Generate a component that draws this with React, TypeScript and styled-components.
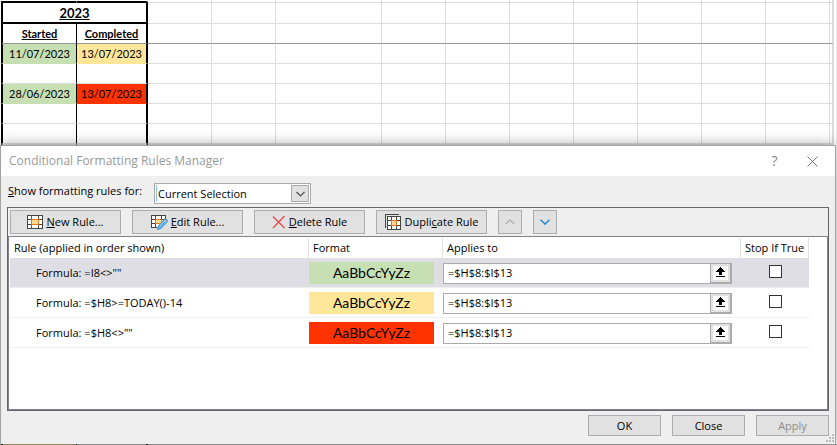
import React from "react";
import styled, { createGlobalStyle, css } from "styled-components";

const GlobalStyle = createGlobalStyle`
  *, *::before, *::after { box-sizing: border-box; }
  body { margin: 0; background: #fff; overflow: hidden; }
  button, input, select { font: inherit; color: inherit; margin: 0; }
`;

const ui = `"Open Sans", "Noto Sans", sans-serif`;
const sheetFont = `Lato, "Open Sans", sans-serif`;

const Page = styled.main`
  font: 11px/16px ${ui};
  color: #000;
`;

/* ---------- worksheet ---------- */

const Sheet = styled.div`
  padding: 0 2px 0 1px;
  background: #fff;
  border-right: 1px solid #ececec;
`;

const Grid = styled.table`
  width: 100%;
  table-layout: fixed;
  border-collapse: separate;
  border-spacing: 0;
  border-right: 1px solid #dcdcdc;
  font: 11px/14px ${sheetFont};
`;

const GridRow = styled.tr<{ $height: number; $frozen?: boolean }>`
  height: ${(p) => p.$height}px;
  & > * { border-bottom: 1px solid ${(p) => (p.$frozen ? "#979797" : "#dcdcdc")}; }
`;

const Cell = styled.td<{ $fill?: string }>`
  padding: 0;
  text-align: center;
  border-right: 1px solid #dcdcdc;
  ${(p) => p.$fill && css`
    background: ${p.$fill};
    &&& { border-bottom-color: ${p.$fill}; }
  `}
`;

const StartCell = styled(Cell)`
  border-left: 2px solid #000;
  border-right-color: #000;
`;

const EndCell = styled(Cell)`
  border-right: 2px solid #000;
`;

const YearHead = styled.th`
  padding: 0;
  border-left: 2px solid #000;
  border-right: 2px solid #000;
  font-size: 13px;
  text-decoration: underline;
  &&& { border-bottom: 2px solid #000; }
`;

const TopCell = styled(Cell)`
  &&& { border-bottom: 2px solid #000; }
`;

const Heading = styled.span`
  font-weight: 700;
  text-decoration: underline;
`;

const PeekRow = styled.div`
  display: grid;
  grid-template-columns: 1px 2px 73px 1px 69px 2px 1fr;
  height: 1px;
  background: #a6a6a6;
`;

const Peek = styled.span<{ $color: string }>`
  background: ${(p) => p.$color};
`;

/* ---------- dialog ---------- */

const Dialog = styled.section`
  position: relative;
  margin: 0 1px 0 0;
  border: solid #a3a3a3;
  border-width: 1px 1px 0;
  background: #efefef;
  box-shadow: 0 0 14px rgba(0, 0, 0, 0.35);
`;

const TitleBar = styled.header`
  display: flex;
  align-items: center;
  height: 30px;
  padding: 0 8px;
  background: #fff;
  color: #999;
`;

const Title = styled.h1`
  flex: 1;
  margin: 0;
  font-size: 12px;
  font-weight: 400;
`;

const CaptionButton = styled.button`
  display: grid;
  place-items: center;
  width: 45px;
  height: 28px;
  padding: 0;
  border: 0;
  background: none;
  font-size: 14px;
  color: #808080;
  &:last-child { width: 30px; }
`;

const Content = styled.div`
  padding: 7px 6px 8px;
`;

const ScopeRow = styled.div`
  display: flex;
  align-items: flex-start;
  gap: 10px;
  height: 24px;
`;

const ScopeLabel = styled.label`
  width: 137px;
  padding-left: 1px;
  white-space: nowrap;
`;

const SelectBox = styled.span`
  display: grid;
  grid-template-columns: 1fr 18px;
  align-items: center;
  width: 157px;
  height: 21px;
  padding: 1px;
  border: 1px solid #ababab;
  background: #fff;
`;

const Select = styled.select`
  grid-area: 1 / 1 / 2 / 3;
  width: 100%;
  height: 17px;
  padding: 0 18px 0 1px;
  border: 0;
  border-left: 1px solid #91c4ea;
  outline: 0;
  border-radius: 0;
  background: none;
  appearance: none;
`;

const SelectArrow = styled.span`
  grid-area: 1 / 2;
  display: grid;
  place-items: center;
  height: 17px;
  border: 1px solid #ababab;
  background: #e1e1e1;
  pointer-events: none;
`;

const Frame = styled.div`
  border: 1px solid #65656a;
`;

const Toolbar = styled.div`
  display: flex;
  gap: 11px;
  padding: 2px 2px;
`;

const Button = styled.button<{ $width: number }>`
  display: flex;
  align-items: center;
  justify-content: center;
  gap: 3px;
  width: ${(p) => p.$width}px;
  height: 24px;
  padding: 0;
  border: 1px solid #adadad;
  background: #e1e1e1;
  white-space: nowrap;
  &:disabled { color: #8c8c8c; }
`;

const ListBox = styled.div`
  height: 174px;
  padding: 1px 18px 0 1px;
  border: 1px solid #828290;
  background: #fff;
`;

const Rules = styled.table`
  width: 100%;
  table-layout: fixed;
  border-collapse: separate;
  border-spacing: 0;
`;

const ColumnHead = styled.th`
  height: 20px;
  padding: 0 0 0 4px;
  border-right: 1px solid #e2e2e2;
  font-weight: 400;
  text-align: left;
  white-space: nowrap;
`;

const RuleRow = styled.tr<{ $selected?: boolean }>`
  height: 30px;
  background: ${(p) => (p.$selected ? "#dfdee4" : "#fff")};
`;

const RuleCell = styled.td`
  padding: 0;
  border-bottom: 1px solid #eee;
`;

const Formula = styled(RuleCell)`
  padding-left: 26px;
`;

const TickCell = styled(RuleCell)`
  text-align: center;
`;

const Swatch = styled.div<{ $fill: string }>`
  width: 125px;
  height: 22px;
  background: ${(p) => p.$fill};
  font: 14px/22px ${sheetFont};
  text-align: center;
`;

const RangeField = styled.div`
  display: flex;
  height: 21px;
  margin: 1px 9px 0 0;
  border: 1px solid #ababab;
  background: #fff;
`;

const RangeInput = styled.input`
  flex: 1;
  min-width: 0;
  padding: 0 4px;
  border: 0;
  outline: 0;
  background: none;
`;

const PickButton = styled.button`
  display: grid;
  place-items: center;
  width: 21px;
  height: 19px;
  padding: 0;
  border: 1px solid #ababab;
  border-width: 0 1px 1px;
  background: #fff;
  box-shadow: inset 0 0 0 2px #e1e1e1;
`;

const Tick = styled.input`
  display: block;
  width: 13px;
  height: 13px;
  margin: 0 auto 2px;
  border: 1px solid #333;
  background: #fff;
  appearance: none;
  &:checked { background: #333; }
`;

const Footer = styled.footer`
  display: flex;
  justify-content: flex-end;
  gap: 11px;
  padding-top: 4px;
`;

const FooterButton = styled(Button)`
  height: 21px;
`;

const Grip = styled.svg`
  position: absolute;
  right: 1px;
  bottom: 2px;
`;

/* ---------- icons ---------- */

const TableIcon = () => (
  <svg width="16" height="14" viewBox="0 0 16 14" shapeRendering="crispEdges" aria-hidden="true">
    <path d="M0 0H16V14H0Z" fill="#444" />
    <path d="M1 1H4V4H1ZM5 1H11V4H5ZM12 1H15V4H12ZM1 5H4V9H1ZM12 5H15V9H12ZM1 10H4V13H1ZM5 10H11V13H5ZM12 10H15V13H12Z" fill="#fff" />
    <path d="M4 4H12V10H4Z" fill="#e0771c" />
    <path d="M5 5H11V9H5Z" fill="#fbd98f" />
    <path d="M4 1V4M11 1V4M4 10V13M11 10V13" stroke="#e0771c" fill="none" opacity=".3" />
  </svg>
);

const EditIcon = () => (
  <svg width="17" height="15" viewBox="0 0 17 15" aria-hidden="true">
    <g shapeRendering="crispEdges">
      <path d="M0 0H15V13H0Z" fill="#444" />
      <path d="M1 1H4V4H1ZM5 1H10V4H5ZM11 1H14V4H11ZM1 5H4V8H1ZM11 5H14V8H11ZM1 9H4V12H1ZM5 9H10V12H5ZM11 9H14V12H11Z" fill="#fff" />
      <path d="M4 4H11V9H4Z" fill="#e0771c" />
      <path d="M5 5H10V8H5Z" fill="#fbd98f" />
    </g>
    <path d="M16 3V15H6V12Z" fill="#e1e1e1" />
    <path d="M6.5 14.5 7.5 11 13.5 4.6Q15 3.8 16 5T15.8 7.3L9.8 13.5Z" fill="#9dcdf0" stroke="#2b88cf" />
    <path d="M8 11.5 9.6 13.2M9.5 11.8 14 7" stroke="#2b88cf" fill="none" />
  </svg>
);

const DeleteIcon = () => (
  <svg width="14" height="14" viewBox="0 0 14 14" aria-hidden="true">
    <path d="M1 1.5 12.5 13M12.5 1 1 13" stroke="#e8494b" strokeWidth="1.3" fill="none" />
  </svg>
);

const DuplicateIcon = () => (
  <svg width="17" height="16" viewBox="0 0 17 16" shapeRendering="crispEdges" aria-hidden="true">
    <path d="M0 14V0H14V1H1V14Z" fill="#444" />
    <path d="M2 2H16V16H2Z" fill="#444" />
    <path d="M3 3H6V6H3ZM7 3H11V6H7ZM12 3H15V6H12ZM3 7H6V11H3ZM12 7H15V11H12ZM3 12H6V15H3ZM7 12H11V15H7ZM12 12H15V15H12Z" fill="#fff" />
    <path d="M6 6H12V12H6Z" fill="#e0771c" />
    <path d="M7 7H11V11H7Z" fill="#fbd98f" />
  </svg>
);

const Chevron = ({ up, color, size = 10 }: { up?: boolean; color: string; size?: number }) => (
  <svg width={size} height="6" viewBox="0 0 10 6" aria-hidden="true">
    <path d={up ? "M.5 5.3 5 .9 9.5 5.3" : "M.5 .7 5 5.1 9.5 .7"} stroke={color} strokeWidth="1.4" fill="none" />
  </svg>
);

const CloseIcon = () => (
  <svg width="11" height="11" viewBox="0 0 11 11" aria-hidden="true">
    <path d="M.5 .5 10.5 10.5M10.5 .5 .5 10.5" stroke="#777" fill="none" />
  </svg>
);

const PickIcon = () => (
  <svg width="9" height="11" viewBox="0 0 9 11" shapeRendering="crispEdges" aria-hidden="true">
    <path d="M4 0H5V1H6V2H7V3H8V4H9V5H6V4H5V8H4V8H3V4H3V5H0V4H1V3H2V2H3V1H4ZM3 3H6V8H3ZM0 9H9V10H0Z" fill="#000" />
  </svg>
);

/* ---------- data ---------- */

const GREEN = "#c6e0b4";
const YELLOW = "#ffe699";
const RED = "#ff3300";

const fixedColumns = [76, 71, 64, 64, 106, 64, 64, 64, 64, 64, 64, 64];
const blanks = Array.from({ length: 11 }, (_, i) => i);

const dates = [
  { started: "11/07/2023", completed: "13/07/2023", fill: YELLOW },
  null,
  { started: "28/06/2023", completed: "13/07/2023", fill: RED },
  null,
  null,
];

const rules = [
  { formula: '=I8<>""', fill: GREEN },
  { formula: "=$H8>=TODAY()-14", fill: YELLOW },
  { formula: '=$H8<>""', fill: RED },
];

const Blanks = () => <>{blanks.map((i) => <Cell key={i} />)}</>;

export default function App() {
  return (
    <Page>
      <GlobalStyle />
      <Sheet>
        <Grid>
          <colgroup>
            {fixedColumns.map((w, i) => <col key={i} width={w} />)}
            <col />
          </colgroup>
          <tbody>
            <GridRow $height={3}>
              <TopCell /><TopCell /><Blanks />
            </GridRow>
            <GridRow $height={21}>
              <YearHead colSpan={2}>2023</YearHead><Blanks />
            </GridRow>
            <GridRow $height={20} $frozen>
              <StartCell><Heading>Started</Heading></StartCell>
              <EndCell><Heading>Completed</Heading></EndCell>
              <Blanks />
            </GridRow>
            {dates.map((d, i) => (
              <GridRow key={i} $height={20}>
                <StartCell $fill={d ? GREEN : undefined}>{d?.started}</StartCell>
                <EndCell $fill={d?.fill}>{d?.completed}</EndCell>
                <Blanks />
              </GridRow>
            ))}
            <GridRow $height={1}>
              <StartCell /><EndCell /><Blanks />
            </GridRow>
          </tbody>
        </Grid>
      </Sheet>

      <Dialog role="dialog" aria-labelledby="dialog-title">
        <TitleBar>
          <Title id="dialog-title">Conditional Formatting Rules Manager</Title>
          <CaptionButton aria-label="Help">?</CaptionButton>
          <CaptionButton aria-label="Close window"><CloseIcon /></CaptionButton>
        </TitleBar>
        <Content>
          <ScopeRow>
            <ScopeLabel htmlFor="scope"><u>S</u>how formatting rules for:</ScopeLabel>
            <SelectBox>
              <Select id="scope"><option>Current Selection</option></Select>
              <SelectArrow><Chevron color="#555" size={9} /></SelectArrow>
            </SelectBox>
          </ScopeRow>
          <Frame>
            <Toolbar>
              <Button $width={111}><TableIcon /><span><u>N</u>ew Rule...</span></Button>
              <Button $width={111}><EditIcon /><span><u>E</u>dit Rule...</span></Button>
              <Button $width={111}><DeleteIcon /><span><u>D</u>elete Rule</span></Button>
              <Button $width={111}><DuplicateIcon /><span>Dupli<u>c</u>ate Rule</span></Button>
              <Button $width={24} disabled aria-label="Move up"><Chevron up color="#b4b4b4" /></Button>
              <Button $width={24} aria-label="Move down"><Chevron color="#1e8ad6" /></Button>
            </Toolbar>
            <ListBox>
              <Rules>
                <colgroup>
                  <col />
                  <col width={134} />
                  <col width={298} />
                  <col width={68} />
                </colgroup>
                <thead>
                  <tr>
                    <ColumnHead>Rule (applied in order shown)</ColumnHead>
                    <ColumnHead>Format</ColumnHead>
                    <ColumnHead>Applies to</ColumnHead>
                    <ColumnHead>Stop If True</ColumnHead>
                  </tr>
                </thead>
                <tbody>
                  {rules.map((r, i) => (
                    <RuleRow key={r.formula} $selected={i === 0}>
                      <Formula>Formula: {r.formula}</Formula>
                      <RuleCell><Swatch $fill={r.fill}>AaBbCcYyZz</Swatch></RuleCell>
                      <RuleCell>
                        <RangeField>
                          <RangeInput aria-label={`Applies to, rule ${i + 1}`} defaultValue="=$H$8:$I$13" />
                          <PickButton aria-label="Select range"><PickIcon /></PickButton>
                        </RangeField>
                      </RuleCell>
                      <TickCell><Tick type="checkbox" aria-label={`Stop if true, rule ${i + 1}`} /></TickCell>
                    </RuleRow>
                  ))}
                </tbody>
              </Rules>
            </ListBox>
          </Frame>
          <Footer>
            <FooterButton $width={73}>OK</FooterButton>
            <FooterButton $width={73}>Close</FooterButton>
            <FooterButton $width={73} disabled>Apply</FooterButton>
          </Footer>
        </Content>
        <Grip width="8" height="8" viewBox="0 0 8 8" shapeRendering="crispEdges" aria-hidden="true">
          <path d="M6 0H8V2H6ZM3 3H5V5H3ZM6 3H8V5H6ZM0 6H2V8H0ZM3 6H5V8H3ZM6 6H8V8H6Z" fill="#bdbdbd" />
        </Grip>
      </Dialog>
      <PeekRow>
        <Peek $color="#a6a6a6" />
        <Peek $color="#222" />
        <Peek $color="#ada06a" />
        <Peek $color="#222" />
        <Peek $color="#a6a6a6" />
        <Peek $color="#222" />
      </PeekRow>
    </Page>
  );
}
